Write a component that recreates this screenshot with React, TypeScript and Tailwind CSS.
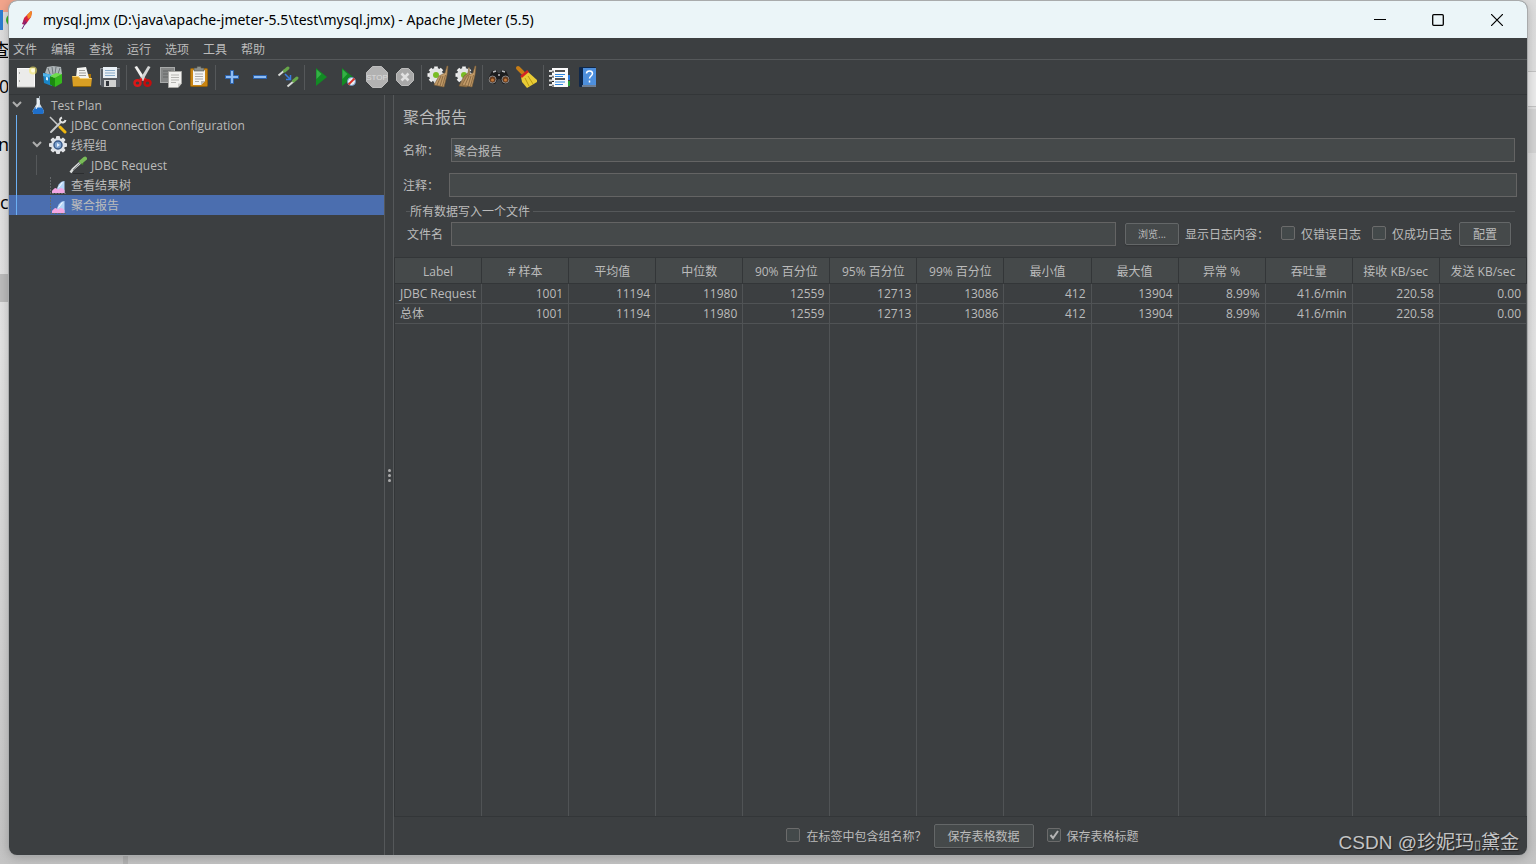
import type { ReactNode } from 'react';

const menus = ['文件', '编辑', '查找', '运行', '选项', '工具', '帮助'];

const columns = [
  'Label',
  '# 样本',
  '平均值',
  '中位数',
  '90% 百分位',
  '95% 百分位',
  '99% 百分位',
  '最小值',
  '最大值',
  '异常 %',
  '吞吐量',
  '接收 KB/sec',
  '发送 KB/sec',
];

const rows = [
  ['JDBC Request', '1001', '11194', '11980', '12559', '12713', '13086', '412', '13904', '8.99%', '41.6/min', '220.58', '0.00'],
  ['总体', '1001', '11194', '11980', '12559', '12713', '13086', '412', '13904', '8.99%', '41.6/min', '220.58', '0.00'],
];

function Icon({ children }: { children: ReactNode }) {
  return (
    <svg viewBox="0 0 24 24" className="size-6 shrink-0" fill="none" aria-hidden="true">
      {children}
    </svg>
  );
}

function SmallIcon({ children }: { children: ReactNode }) {
  return (
    <svg viewBox="0 0 18 18" className="size-[18px] shrink-0" fill="none" aria-hidden="true">
      {children}
    </svg>
  );
}

const gearTeeth = [0, 45, 90, 135, 180, 225, 270, 315];

function NewIcon() {
  return (
    <Icon>
      <rect x="3.5" y="3.5" width="17" height="18" fill="#ebebea" stroke="#fafafa" />
      <path d="M5.5 7v2M5.5 15v2" stroke="#aaa" />
      <path d="M3 22h18" stroke="#b9b9b6" />
      <circle cx="19" cy="5.5" r="4" fill="#f6e96c" opacity=".6" />
      <circle cx="19" cy="5.5" r="2" fill="#fffde0" />
    </Icon>
  );
}

function TemplatesIcon() {
  return (
    <Icon>
      <path d="M3 8l2-6 6-1 8 1 1 7-9 4z" fill="#aeb5b8" />
      <path d="M6 3l2 6M10 2l1 7M14 2l-1 7M18 3l-2 6" stroke="#6d7679" />
      <path d="M1 8l9 2v11l-8-3z" fill="#1a86c8" />
      <path d="M1 8l9 2v3L1 11z" fill="#52b4e8" />
      <path d="M4 12l2 .6v3L4 15z" fill="#d6effb" />
      <path d="M8 11l5 2v9l-5-2.500z" fill="#1c8a10" />
      <path d="M13 13l7-4v9l-7 4z" fill="#36b91c" />
      <path d="M8 11l6-3 6 1-7 4z" fill="#6ede4c" />
    </Icon>
  );
}

function OpenIcon() {
  return (
    <Icon>
      <path d="M3 11h3l1-2h14v11H3z" fill="#a97308" />
      <path d="M7 3l9-1 3 11H6z" fill="#f4f4f2" />
      <path d="M9 5.500h6M9 8h7M9 10.500h7" stroke="#9d9d9b" />
      <path d="M2 11h6l2 2h12l-1 9H3z" fill="#d99f24" />
      <path d="M2.500 11.500H8l2 2h11.500" stroke="#f7d275" />
      <path d="M3 21.500h18" stroke="#8e6308" />
    </Icon>
  );
}

function SaveIcon() {
  return (
    <Icon>
      <path d="M2 3h20v19H4l-2-2z" fill="#565b62" />
      <path d="M2.500 20V3.500h19" stroke="#8d9298" />
      <rect x="5" y="2" width="14" height="11" fill="#e9f0f6" />
      <path d="M7 5.500h10M7 8h10M7 10.500h10" stroke="#88abcb" />
      <rect x="6" y="15" width="12" height="7" fill="#cfd0d0" />
      <rect x="8" y="16" width="3" height="5" fill="#30343a" />
    </Icon>
  );
}

function CutIcon() {
  return (
    <Icon>
      <path d="M3.500 2L6 1l8.500 13-2.500 2z" fill="#f1f1ef" />
      <path d="M19.500 2L17 1 9 14l2.500 2z" fill="#d2d4d4" />
      <path d="M11 14l-2 1M13 14l2 1" stroke="#d81414" strokeWidth="3" />
      <ellipse cx="6.500" cy="18" rx="3" ry="2.800" stroke="#dc1818" strokeWidth="2.500" />
      <ellipse cx="16.500" cy="18" rx="3" ry="2.800" stroke="#c40d0d" strokeWidth="2.500" />
    </Icon>
  );
}

function CopyIcon() {
  return (
    <Icon>
      <rect x="1.500" y="2.500" width="14" height="15" fill="#858787" stroke="#a7a9a9" />
      <path d="M4 6h8M4 9h8M4 12h8" stroke="#646767" />
      <path d="M9.500 6.500h13v12l-3.500 4H9.500z" fill="#f1f1ef" stroke="#a7a7a4" />
      <path d="M12 10h8M12 12.500h8M12 15h8M12 17.500h5" stroke="#b5b5b2" />
      <path d="M22.500 18.500H19v4z" fill="#c9c9c6" />
    </Icon>
  );
}

function PasteIcon() {
  return (
    <Icon>
      <rect x="3.500" y="3.500" width="17" height="18" rx="1" fill="#c98513" stroke="#94610c" />
      <path d="M6 5h12v11l-4 4H6z" fill="#f4f4f2" />
      <path d="M8 9h8M8 11.500h8M8 14h8M8 16.500h4" stroke="#aaa" />
      <path d="M18 16h-4v4z" fill="#bcbcba" />
      <path d="M7 3h3V1.500h4V3h3v3H7z" fill="#8b8f8c" stroke="#51544f" strokeWidth=".6" />
    </Icon>
  );
}

function PlusIcon() {
  return (
    <Icon>
      <path d="M10.500 5.500h3v5h5v3h-5v5h-3v-5h-5v-3h5z" fill="#8dbcf4" stroke="#2c63ad" />
    </Icon>
  );
}

function MinusIcon() {
  return (
    <Icon>
      <rect x="5.500" y="10.500" width="13" height="3" fill="#8dbcf4" stroke="#2c63ad" />
    </Icon>
  );
}

function ToggleIcon() {
  return (
    <Icon>
      <path d="M2.500 10.500L9 5" stroke="#d8dbd8" strokeWidth="2" />
      <path d="M8.500 6l3.500-3" stroke="#67a649" strokeWidth="3" strokeLinecap="round" />
      <path d="M11.500 21.500L18 16" stroke="#d8dbd8" strokeWidth="2" />
      <path d="M17.500 16l3.500-3" stroke="#67a649" strokeWidth="3" strokeLinecap="round" />
      <path d="M9 9l5 5M14.500 10v4.500H10" stroke="#3a7de0" strokeWidth="1.500" />
    </Icon>
  );
}

function StartIcon() {
  return (
    <Icon>
      <path d="M7 3l11 9-11 9z" fill="#128a24" />
      <path d="M7.500 4.500l5 4.500-5 5z" fill="#35b046" />
    </Icon>
  );
}

function StartNoPauseIcon() {
  return (
    <Icon>
      <path d="M5 3l11 9-11 9z" fill="#128a24" />
      <path d="M5.500 4.500l5 4.500-5 5z" fill="#35b046" />
      <circle cx="14.500" cy="16.500" r="4" fill="#e8eef5" stroke="#6d92c2" />
      <path d="M11.500 19.500l6-6" stroke="#d93025" strokeWidth="1.800" />
    </Icon>
  );
}

function StopIcon() {
  return (
    <Icon>
      <path d="M7.500 1.500h9l6 6v9l-6 6h-9l-6-6v-9z" fill="#b2b2b2" stroke="#bdbdbd" />
      <text x="12" y="15" textAnchor="middle" fontSize="8" fill="#dcdcdc" fontFamily="Liberation Sans">
        STOP
      </text>
    </Icon>
  );
}

function ShutdownIcon() {
  return (
    <Icon>
      <path d="M8.500 3.500h7l5 5v7l-5 5h-7l-5-5v-7z" fill="#a8a8a8" stroke="#bcbcbc" />
      <path d="M8.500 8.500l7 7M15.500 8.500l-7 7" stroke="#e0e0e0" strokeWidth="2.500" />
    </Icon>
  );
}

function ClearIcon({ double = false }: { double?: boolean }) {
  return (
    <Icon>
      {gearTeeth.map((angle) => (
        <rect key={angle} x="8.200" y="1.500" width="3.600" height="4" fill="#f2f2f2" transform={`rotate(${angle} 10 10)`} />
      ))}
      <circle cx="10" cy="10" r="7" fill="#e3e4e4" />
      <circle cx="10" cy="10" r="3" fill="#79bd25" />
      {double && <path d="M15 2l-1 6-4 3-5 10 8 1 3-11z" fill="#a98558" stroke="#77592f" strokeWidth=".6" />}
      <path d="M21 1l-2 7-6 3-5 9 10 2 3-12 1-9z" fill="#c19a68" stroke="#7b5c34" strokeWidth=".6" />
      <path d="M15 11l-4 9M17 11l-3 10M19.500 10l-3 11" stroke="#80613a" strokeWidth=".8" />
    </Icon>
  );
}

function SearchIcon() {
  return (
    <Icon>
      <path d="M5 6l4-1 2 3h2l2-3 4 1 4 8-2 4-5 1-3-5h-2l-3 5-5-1-2-4z" fill="#1d1d1e" />
      <path d="M6 7l3-1M15 6l3 1M11 10h2" stroke="#b9bbbd" strokeWidth="1.500" />
      <circle cx="5.500" cy="14.500" r="3.500" fill="#693b1b" stroke="#86888a" />
      <circle cx="18.500" cy="14.500" r="3.500" fill="#693b1b" stroke="#86888a" />
      <circle cx="5.500" cy="15" r="1.500" fill="#c3793b" />
      <circle cx="18.500" cy="15" r="1.500" fill="#c3793b" />
    </Icon>
  );
}

function BroomIcon() {
  return (
    <Icon>
      <path d="M3 3l5 5" stroke="#c77d16" strokeWidth="4" strokeLinecap="round" />
      <path d="M6 12l6-6 10 9v2l-10 6-5-6z" fill="#e9cc35" />
      <path d="M10 13l4 8M13 11l5 8" stroke="#b99910" />
      <path d="M6 12l7-6" stroke="#d32323" strokeWidth="2.500" />
    </Icon>
  );
}

function FunctionHelperIcon() {
  return (
    <Icon>
      <rect x="17" y="10" width="5" height="5" fill="#2b7de0" />
      <rect x="17" y="16" width="5" height="5" fill="#27a239" />
      <rect x="4" y="3" width="16" height="19" fill="#fafafa" />
      <path d="M7 6h10M7 14h10" stroke="#1a1a1a" strokeWidth="1.500" />
      <path d="M7 9.500h10M7 11.500h8M7 17h10M7 19.500h8" stroke="#2f86dd" strokeWidth="1.200" />
      <path d="M1 6h5M1 11h5M1 15.500h5M1 20h5" stroke="#d8d8d8" strokeWidth="1.800" />
      <path d="M4 7h2M4 12h2M4 16.500h2M4 21h2" stroke="#222" />
    </Icon>
  );
}

function HelpIcon() {
  return (
    <Icon>
      <rect x="3" y="2" width="17" height="20" rx="1" fill="#10284a" />
      <rect x="7" y="3" width="13" height="17" fill="#4d8fdd" />
      <path d="M6 21h14" stroke="#c8d4e2" />
      <path d="M10.500 8.500c0-3.500 6-3.500 6 0 0 2.500-3 2.500-3 5M13.500 15.500v2" stroke="#fff" strokeWidth="1.500" />
    </Icon>
  );
}

const toolGroups = [
  [
    { name: '新建', icon: <NewIcon /> },
    { name: '模板', icon: <TemplatesIcon /> },
    { name: '打开', icon: <OpenIcon /> },
    { name: '保存', icon: <SaveIcon /> },
  ],
  [
    { name: '剪切', icon: <CutIcon /> },
    { name: '复制', icon: <CopyIcon /> },
    { name: '粘贴', icon: <PasteIcon /> },
  ],
  [
    { name: '展开', icon: <PlusIcon /> },
    { name: '折叠', icon: <MinusIcon /> },
    { name: '切换', icon: <ToggleIcon /> },
  ],
  [
    { name: '启动', icon: <StartIcon /> },
    { name: '不停顿开始', icon: <StartNoPauseIcon /> },
    { name: '停止', icon: <StopIcon /> },
    { name: '关闭', icon: <ShutdownIcon /> },
  ],
  [
    { name: '清除', icon: <ClearIcon /> },
    { name: '清除全部', icon: <ClearIcon double /> },
  ],
  [
    { name: '搜索', icon: <SearchIcon /> },
    { name: '重置搜索', icon: <BroomIcon /> },
  ],
  [
    { name: '函数助手', icon: <FunctionHelperIcon /> },
    { name: '帮助', icon: <HelpIcon /> },
  ],
];

function FlaskIcon() {
  return (
    <SmallIcon>
      <path d="M7.500 2h3.500v6l4 7-1 3H4.500l-1-3 4-7z" fill="#d3dee7" />
      <path d="M6 11.500h7l2 3.500-1 3H4.500l-1-3z" fill="#1f6fca" />
      <path d="M9 3v6l-2 4" stroke="#fff" />
      <path d="M10.500 0v4" stroke="#9aa5ad" />
    </SmallIcon>
  );
}

function ToolsIcon() {
  return (
    <SmallIcon>
      <path d="M1 1l9 9" stroke="#c9cbcb" strokeWidth="1.500" />
      <path d="M11 11l5 5" stroke="#eeb70f" strokeWidth="3" strokeLinecap="round" />
      <path d="M2 16L12 6" stroke="#c9cccc" strokeWidth="2" strokeLinecap="round" />
      <path d="M13 1.500c-2.500 1-2.500 3.500-1 4.500s4 .5 4.500-2" stroke="#e4e5e5" strokeWidth="2" />
    </SmallIcon>
  );
}

function GearIcon() {
  return (
    <SmallIcon>
      {gearTeeth.map((angle) => (
        <rect key={angle} x="7" y="0" width="4" height="5" rx="1" fill="#e0e2e5" transform={`rotate(${angle} 9 9)`} />
      ))}
      <circle cx="9" cy="9" r="7" fill="#dfe3e8" />
      <circle cx="9" cy="9" r="4" fill="#7da2cf" stroke="#3a5a88" strokeWidth="1.500" />
      <path d="M8 7l3 2-3 2z" fill="#e6f0fb" />
    </SmallIcon>
  );
}

function PipetteIcon() {
  return (
    <SmallIcon>
      <path d="M4 17.500h11" stroke="#2c2e30" />
      <path d="M1.500 16.500L4 13l8-7" stroke="#d9dcda" strokeWidth="2.500" />
      <path d="M4 14l7-7" stroke="#6d7478" strokeWidth=".8" />
      <path d="M10 4.500l4 4" stroke="#3e7a2b" strokeWidth="2" />
      <path d="M12.500 5.500L16 2.500" stroke="#79bb58" strokeWidth="4" strokeLinecap="round" />
    </SmallIcon>
  );
}

function ChartIcon() {
  return (
    <SmallIcon>
      <path d="M1.500 1v16.500H17" stroke="#66696b" strokeDasharray="2 1" />
      <path d="M8 13c1-5 4-8 7.500-8v12H8z" fill="#b5d5f8" />
      <path d="M3 17v-2c1-1 2-3 4-3 1 1 2 2 3 1 2-2 3-1 5.500 1v3z" fill="#f3a6e2" />
      <path d="M9.500 11.500l4-5" stroke="#fff" />
    </SmallIcon>
  );
}

function Chevron() {
  return (
    <svg viewBox="0 0 16 16" className="size-4 shrink-0" fill="none" aria-hidden="true">
      <path d="M4 5l4 4 4-4" stroke="#adadad" strokeWidth="2" />
    </svg>
  );
}

function TreeRow({ icon, label, open, selected, indent = 'pl-0' }: { icon: ReactNode; label: string; open?: boolean; selected?: boolean; indent?: string }) {
  return (
    <div className={`flex h-5 items-center gap-1 ${indent} ${selected ? 'bg-[#4b6eaf]' : ''}`}>
      {open ? <Chevron /> : <span className="w-4" />}
      {icon}
      <span className="pt-0.5">{label}</span>
    </div>
  );
}

function Tree() {
  return (
    <ul className="w-[375px] shrink-0 text-xs whitespace-nowrap">
      <li>
        <TreeRow icon={<FlaskIcon />} label="Test Plan" open />
        <ul className="relative before:absolute before:inset-y-0 before:left-[7px] before:w-px before:bg-[#6cb0f5]">
          <li><TreeRow icon={<ToolsIcon />} label="JDBC Connection Configuration" indent="pl-5" /></li>
          <li>
            <TreeRow icon={<GearIcon />} label="线程组" indent="pl-5" open />
            <ul className="relative before:absolute before:inset-y-0 before:left-[27px] before:w-px before:bg-[#55585a]">
              <li><TreeRow icon={<PipetteIcon />} label="JDBC Request" indent="pl-10" /></li>
            </ul>
          </li>
          <li><TreeRow icon={<ChartIcon />} label="查看结果树" indent="pl-5" /></li>
          <li><TreeRow icon={<ChartIcon />} label="聚合报告" indent="pl-5" selected /></li>
        </ul>
      </li>
    </ul>
  );
}

function Check({ label, checked }: { label: string; checked?: boolean }) {
  return (
    <label className="flex shrink-0 items-center gap-1.5">
      <span className="mb-0.5 grid">
        <input
          type="checkbox"
          defaultChecked={checked}
          className="peer col-start-1 row-start-1 size-3.5 appearance-none rounded-xs border border-[#6b6b6b] bg-[#43494a]"
        />
        <svg viewBox="0 0 14 14" className="invisible col-start-1 row-start-1 size-3.5 peer-checked:visible" fill="none" aria-hidden="true">
          <path d="M3.500 7l2.500 3L11 3" stroke="#b4b4b4" strokeWidth="2" />
        </svg>
      </span>
      <span className="pt-0.5">{label}</span>
    </label>
  );
}

const inputClass = 'h-6 min-w-0 flex-1 border border-[#646464] bg-[#45494a] px-0.5 pt-0.5 text-xs outline-none';
const buttonClass = 'shrink-0 rounded-xs border border-[#646768] bg-[#45494a] pt-0.5 shadow-[0_1px_1px_#333638]';

function TitleBar() {
  return (
    <header className="flex h-[37px] shrink-0 items-center bg-[#ebf5f8] text-black">
      <svg viewBox="0 0 16 20" className="ml-2.5 h-5 w-4" aria-hidden="true">
        <path d="M12 1l1 1-1 5-5 7-3-1 1-5z" fill="#d7213f" />
        <path d="M12 1l1 1-1 5-3 2-1-4z" fill="#f18a25" />
        <path d="M5 9l3 3-2 3-3-1z" fill="#a21f63" />
        <path d="M7 12L3 19" stroke="#6d2679" />
      </svg>
      <h1 className="ml-2 flex-1 font-['Noto_Sans',sans-serif] text-sm whitespace-nowrap">mysql.jmx (D:\java\apache-jmeter-5.5\test\mysql.jmx) - Apache JMeter (5.5)</h1>
      <button aria-label="最小化" className="grid h-full w-[58px] place-items-center">
        <svg viewBox="0 0 12 12" className="size-3" stroke="currentColor"><path d="M0 5.500h12" /></svg>
      </button>
      <button aria-label="最大化" className="grid h-full w-[58px] place-items-center">
        <svg viewBox="0 0 12 12" className="size-3" fill="none" stroke="currentColor" strokeWidth="1.300"><rect x=".7" y=".7" width="10.600" height="10.600" rx="1" /></svg>
      </button>
      <button aria-label="关闭" className="grid h-full w-[60px] place-items-center">
        <svg viewBox="0 0 12 12" className="size-3" stroke="currentColor" strokeWidth="1.200"><path d="M0 0l12 12M12 0L0 12" /></svg>
      </button>
    </header>
  );
}

function Toolbar() {
  return (
    <div role="toolbar" className="flex h-[35px] shrink-0 items-center border-b border-[#333638] pl-[3px]">
      {toolGroups.map((group, i) => (
        <div key={i} className="flex items-center">
          {i > 0 && <span className="mx-0.5 h-[25px] w-px bg-[#55585a]" />}
          {group.map((tool) => (
            <button key={tool.name} aria-label={tool.name} className="flex w-7 justify-center">
              {tool.icon}
            </button>
          ))}
        </div>
      ))}
    </div>
  );
}

function ReportTable() {
  return (
    <div className="flex min-h-0 flex-1 flex-col border-y border-l border-[#333638]">
      <table className="w-full flex-1 table-fixed border-separate border-spacing-0 text-xs leading-4 whitespace-nowrap">
        <thead>
          <tr className="h-[26px] bg-[#45494a]">
            {columns.map((column) => (
              <th key={column} className="h-[26px] border-r border-b border-[#333638] px-0 pt-0.5 pb-0 font-normal">{column}</th>
            ))}
          </tr>
        </thead>
        <tbody>
          {rows.map((row) => (
            <tr key={row[0]} className="h-5">
              {row.map((cell, i) => (
                <td key={i} className={`h-5 border-r border-b border-[#505355] px-[5px] py-0 ${i === 0 ? 'text-left' : 'text-right'}`}>{cell}</td>
              ))}
            </tr>
          ))}
          {/* takes the rest of the height so the column lines reach the bottom */}
          <tr className="h-full" aria-hidden="true">
            {columns.map((column) => (
              <td key={column} className="border-r border-[#505355] p-0" />
            ))}
          </tr>
        </tbody>
      </table>
    </div>
  );
}

function ReportPanel() {
  return (
    <main className="flex min-w-0 flex-1 flex-col border-l border-[#55585a] text-xs whitespace-nowrap">
      <h2 className="px-[9px] pt-2.5 text-base leading-6">聚合报告</h2>
      <div className="mt-[9px] flex items-center pr-3 pl-[9px]">
        <label htmlFor="name" className="w-12 pt-0.5">名称：</label>
        <input id="name" className={inputClass} defaultValue="聚合报告" />
      </div>
      <div className="mt-[11px] flex items-center pr-2.5 pl-[9px]">
        <label htmlFor="comment" className="w-[46px] pt-0.5">注释：</label>
        <input id="comment" className={inputClass} />
      </div>
      <fieldset className="mt-[5px] mr-3 ml-3 min-w-0 border-t border-[#55585a]">
        <legend className="ml-1 pt-0.5 pr-[3px] leading-4">所有数据写入一个文件</legend>
        <div className="flex items-center pt-0.5 pr-1 pl-px">
          <label htmlFor="file" className="w-11 pt-0.5">文件名</label>
          <input id="file" className={inputClass} />
          <button className={`${buttonClass} ml-[9px] h-[22px] w-[54px] text-[10px]`}>浏览...</button>
          <span className="ml-1.5 w-24 pt-0.5">显示日志内容：</span>
          <div className="flex gap-[11px]">
            <Check label="仅错误日志" />
            <Check label="仅成功日志" />
          </div>
          <button className={`${buttonClass} ml-[7px] h-6 w-[52px]`}>配置</button>
        </div>
      </fieldset>
      <div className="mt-[11px] flex min-h-0 flex-1 flex-col">
        <ReportTable />
      </div>
      <div className="flex h-[38px] shrink-0 items-center justify-center pl-1">
        <Check label="在标签中包含组名称？" />
        <button className={`${buttonClass} mr-[13px] ml-[7px] h-6 w-[100px]`}>保存表格数据</button>
        <Check label="保存表格标题" checked />
      </div>
    </main>
  );
}

// Edges of the windows that lie behind JMeter
function Desktop() {
  return (
    <div className="absolute inset-0 overflow-hidden bg-[linear-gradient(#dedede,#e4e4e4_40%,#c4c4c4)] text-lg leading-6 text-black" aria-hidden="true">
      <div className="absolute top-0 left-0 h-3 w-5 bg-[#f2a58c]" />
      <div className="absolute top-2.5 left-0 h-5 w-[3px] bg-[#2d7dd2]" />
      <div className="absolute top-3.5 left-1.5 size-3 rounded-full bg-[#35b52a]" />
      <div className="absolute top-[38px] -left-2">查</div>
      <div className="absolute top-[74px] -left-px">0</div>
      <div className="absolute top-[132px] -left-0.5">n</div>
      <div className="absolute top-[190px] left-0">co</div>
      <div className="absolute top-[274px] left-0 h-7 w-3 bg-[#bcbcbc]" />
      <div className="absolute top-[71px] right-0 h-9 w-3 border-y border-[#c4c4c4] bg-[#ececec]" />
      <div className="absolute top-[109px] right-0 h-11 w-3 bg-[#d4d4d4]" />
      <div className="absolute bottom-0 left-[123px] h-3 w-[5px] bg-[#b2b2b2]" />
    </div>
  );
}

export default function App() {
  return (
    <div className="relative flex min-h-screen flex-col px-[9px] pt-px pb-[9px] font-['Open_Sans','Noto_Sans_CJK_SC',sans-serif] text-[#bbbbbb]">
      <Desktop />
      <div className="relative flex flex-1 flex-col overflow-hidden rounded-lg bg-[#3c3f41] shadow-[0_0_0_1px_#a9abac,0_2px_12px_#00000040]">
        <TitleBar />
        <nav className="flex h-[22px] shrink-0 items-center gap-3.5 border-b border-[#55585a] pt-0.5 pl-1 text-xs">
          {menus.map((menu) => (
            <button key={menu}>{menu}</button>
          ))}
        </nav>
        <Toolbar />
        <div className="flex min-h-0 flex-1">
          <Tree />
          <div className="flex w-[9px] shrink-0 flex-col items-center justify-center gap-0.5 border-l border-[#55585a]">
            <span className="size-[3px] rounded-full bg-[#adadad]" />
            <span className="size-[3px] rounded-full bg-[#adadad]" />
            <span className="size-[3px] rounded-full bg-[#adadad]" />
          </div>
          <ReportPanel />
        </div>
        <p className="absolute right-2 bottom-0 font-['Liberation_Sans','Noto_Sans_CJK_SC',sans-serif] text-[19px] leading-5 text-[#c3c4c5] [text-shadow:1px_1px_1px_#222]">
          CSDN @珍妮玛<span className="text-[13px]">▯</span>黛金
        </p>
      </div>
    </div>
  );
}
